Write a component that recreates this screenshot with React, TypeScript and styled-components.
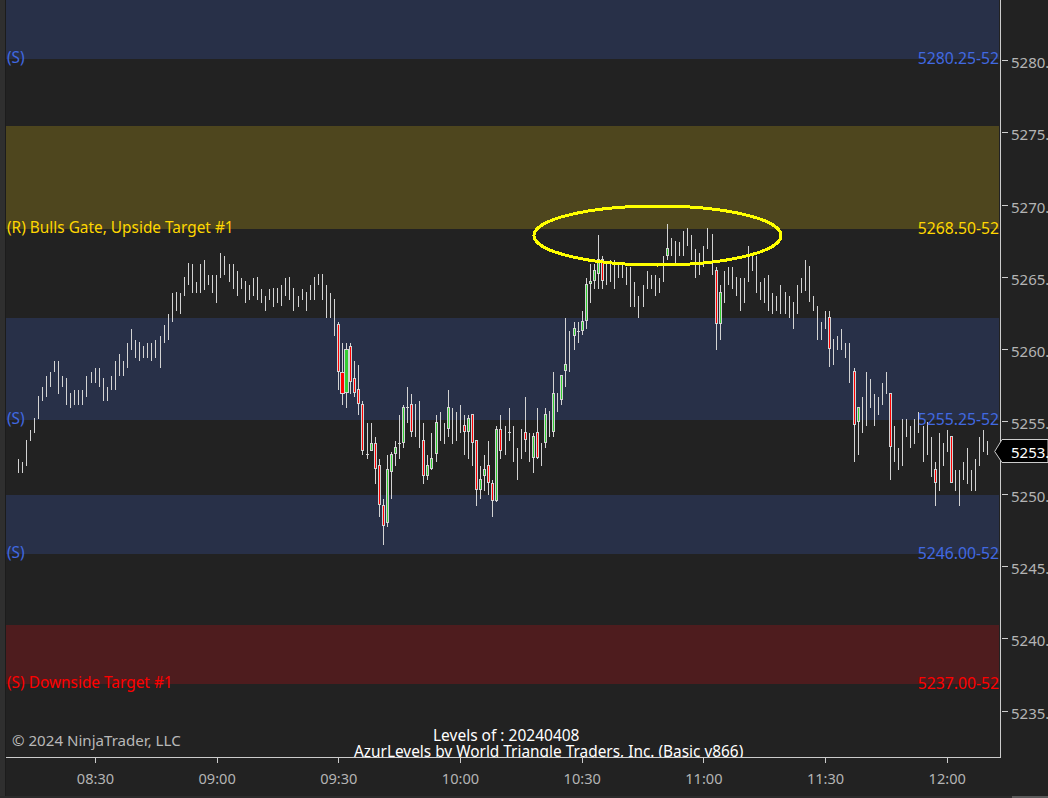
import styled, { createGlobalStyle } from 'styled-components'

type Kind = 'r' | 'g' | 'R' | 'G'
type Row = [number, number] | [number, number, number, number, Kind]

// rows are read off in thirds of a pixel, from the y where each stretch starts
const stretch = (y0: number, rows: Row[]) =>
  rows.map((r) => r.map((v) => (typeof v === 'number' ? y0 + v / 3 : v)) as Row)

const bars: Row[] = [
  ...stretch(400, [[177, 219], [186, 219], [120, 198], [90, 123], [54, 99]]),
  ...stretch(230, [
    [498, 567], [471, 513], [438, 501], [427, 471], [393, 426], [393, 491], [438, 471], [445, 525], [489, 534], [480, 525], [480, 525], [480, 525],
    [438, 501], [426, 459], [414, 459], [414, 471], [444, 513], [471, 513], [438, 480], [393, 480], [372, 438], [393, 438], [339, 414], [297, 360],
    [330, 384], [336, 393], [348, 384], [339, 384], [339, 393], [330, 384], [318, 414], [285, 339], [252, 330], [189, 276], [186, 243], [189, 252],
    [141, 198], [99, 165], [102, 189], [156, 189], [102, 189], [90, 180], [135, 165], [135, 189], [135, 219], [69, 144], [78, 135], [102, 156],
    [102, 177], [123, 198], [144, 177], [153, 219], [165, 210], [144, 198], [141, 210], [177, 219], [198, 243], [177, 210], [174, 231], [174, 219],
    [165, 228], [144, 198], [141, 210], [174, 243], [198, 231], [177, 210], [186, 243], [165, 210], [141, 210], [132, 165], [132, 210], [165, 264],
    [189, 264], [207, 318],
  ]),
  ...stretch(300, [
    [66, 270, 72, 215, 'r'], [129, 315, 215, 281, 'R'], [129, 324, 148, 281, 'G'], [129, 282, 139, 248, 'r'], [183, 291, 235, 281, 'r'],
    [195, 345, 268, 314, 'r'], [304, 465, 313, 455, 'r'], [370, 477, 463, 463, 'g'], [370, 455, 430, 455, 'g'], [411, 552, 430, 509, 'r'],
    [477, 651, 496, 617, 'r'], [597, 735, 616, 680, 'r'], [465, 681, 508, 671, 'g'], [457, 597, 463, 517, 'g'], [423, 498, 442, 464, 'g'],
    [346, 477, 430, 430, 'g'], [316, 444, 322, 431, 'g'], [262, 369, 322, 322, 'g'], [282, 411, 313, 397, 'r'], [312, 411], [304, 444],
    [370, 552, 421, 529, 'r'], [465, 540, 496, 529, 'g'], [400, 510, 475, 508, 'g'], [346, 486, 367, 464, 'g'], [336, 423], [370, 432],
    [270, 411, 322, 388, 'g'], [325, 432], [336, 423], [315, 399], [346, 465, 376, 398, 'r'], [346, 477, 355, 398, 'g'], [343, 498, 343, 431, 'r'],
    [421, 618, 421, 571, 'r'], [498, 597, 538, 571, 'g'], [465, 573, 508, 529, 'g'], [423, 585, 496, 550, 'r'], [540, 651, 550, 605, 'r'],
    [378, 605, 388, 605, 'g'], [346, 477, 388, 455, 'r'], [378, 465], [324, 423, 397, 397, 'g'], [378, 486], [445, 540], [388, 477],
    [291, 456, 397, 422, 'r'], [400, 486], [400, 519, 409, 475, 'g'], [324, 477, 397, 475, 'r'], [430, 498], [324, 444, 343, 431, 'g'], [334, 411],
    [216, 411, 280, 398, 'g'], [280, 336], [226, 315, 226, 302, 'g'], [54, 261, 193, 215, 'g'], [94, 216], [66, 150, 84, 107, 'g'], [66, 129, 94, 94, 'g'],
  ]),
  ...stretch(195, [
    [348, 420, 379, 410, 'g'], [250, 402, 268, 380, 'g'], [207, 324, 259, 268, 'g'], [207, 282, 226, 260, 'g'], [120, 282, 193, 239, 'g'],
    [183, 282, 193, 260, 'r'], [205, 270], [195, 261], [195, 282], [210, 249], [210, 249], [216, 270], [216, 336], [261, 336], [303, 369], [270, 336],
    [228, 282], [240, 282], [240, 303], [249, 294], [183, 261], [87, 195, 160, 183, 'g'], [129, 183], [138, 207], [141, 183], [108, 183], [99, 153],
    [120, 195], [162, 249], [174, 240], [153, 216], [99, 162], [117, 240], [216, 465, 226, 389, 'r'], [270, 435, 292, 389, 'g'], [228, 324], [216, 270],
    [216, 282], [246, 303], [249, 348], [249, 324], [153, 261], [180, 228], [183, 294], [261, 315], [249, 324], [240, 348], [294, 357], [303, 348],
    [270, 357], [291, 357], [303, 369], [321, 402], [270, 357],
  ]),
  ...stretch(250, [
    [84, 129], [30, 123], [48, 157], [138, 183], [168, 270], [216, 270], [183, 237], [184, 352, 202, 298, 'r'], [268, 345], [258, 300], [238, 300],
    [280, 324], [280, 400], [354, 636, 364, 526, 'r'], [472, 615, 472, 517, 'g'], [441, 548], [366, 528], [387, 474], [432, 528], [441, 495], [399, 465],
    [366, 432], [430, 690, 430, 592, 'r'], [528, 636], [594, 660], [507, 648], [507, 561], [528, 594], [507, 582], [486, 549], [528, 636], [516, 615],
    [561, 681], [636, 768, 658, 700, 'r'], [549, 722], [579, 648], [540, 606], [558, 700, 558, 700, 'r'], [660, 722], [660, 768], [636, 690], [594, 702],
    [660, 722], [627, 722], [561, 648], [540, 606], [573, 615],
  ]),
]

const bands = [
  { y: 0, h: 59, fill: '#283048' },
  { y: 126, h: 103, fill: '#4e461e' },
  { y: 318, h: 102, fill: '#283048' },
  { y: 495, h: 59, fill: '#283048' },
  { y: 625, h: 59, fill: '#4e1c1e' },
]

const levels = [
  { y: 57, tone: '#4169e1', name: '(S)', price: '5280.25-52' },
  { y: 227, tone: '#ffd700', name: '(R) Bulls Gate, Upside Target #1', price: '5268.50-52' },
  { y: 418, tone: '#4169e1', name: '(S)', price: '5255.25-52' },
  { y: 552, tone: '#4169e1', name: '(S)', price: '5246.00-52' },
  { y: 682, tone: '#ff0000', name: '(S) Downside Target #1', price: '5237.00-52' },
]

const priceTicks = [5280, 5275, 5270, 5265, 5260, 5255, 5250, 5245, 5240, 5235]
const timeTicks = ['08:30', '09:00', '09:30', '10:00', '10:30', '11:00', '11:30', '12:00']

const GlobalStyle = createGlobalStyle`
  html, body { margin: 0; height: 100%; background: #222222; overflow: hidden; }
  body { font-family: "Noto Sans", "Open Sans", sans-serif; }
`

const Page = styled.div`
  width: 1048px;
  height: 798px;
  display: grid;
  grid-template-columns: 6px 995px 47px;
  grid-template-rows: 758px 38px 2px;
  background: #222222;
  overflow: hidden;
`

const LeftEdge = styled.div`
  grid-row: 1 / 3;
  background: #2f2f2f;
  border-right: 1px solid #1c1c1c;
  box-sizing: border-box;
`

const Plot = styled.div`
  position: relative;
  overflow: hidden;
  border-right: 1px solid #cccccc;
  border-bottom: 1px solid #cccccc;
  box-sizing: border-box;
`

const Chart = styled.svg`
  position: absolute;
  inset: 0;
  display: block;
  shape-rendering: crispEdges;
`

const Wick = styled.rect`
  fill: #d3d3d3;
`

const LevelRow = styled.div<{ $y: number; $tone: string }>`
  position: absolute;
  left: 1px;
  right: 1px;
  top: ${({ $y }) => $y - 11}px;
  display: flex;
  justify-content: space-between;
  line-height: 24px;
  font-size: 15.4px;
  white-space: nowrap;
  color: ${({ $tone }) => $tone};
`

const LevelPrice = styled.span`
  font-size: 15.75px;
`

const Copyright = styled.span`
  position: absolute;
  left: 6px;
  top: 728px;
  line-height: 24px;
  font-size: 15.1px;
  white-space: nowrap;
  color: #b8b8b8;
`

const Captions = styled.div`
  position: absolute;
  left: 348px;
  top: 727px;
  display: flex;
  flex-direction: column;
  align-items: flex-start;
  row-gap: 1px;
  line-height: 16px;
  font-size: 15.4px;
  white-space: nowrap;
  color: #ffffff;
`

const LevelsDate = styled.span`
  margin-left: 79px;
  font-size: 15.5px;
`

const PriceAxis = styled.div`
  position: relative;
  display: flex;
  flex-direction: column;
  padding-top: 60px;
  min-height: 0;
`

const PriceTick = styled.div`
  flex: none;
  height: 72.3px;
  display: flex;
  align-items: flex-start;
  column-gap: 3px;
  font-size: 15px;
  line-height: 24px;
  color: #b4b4b4;
  white-space: nowrap;

  &::before {
    content: '';
    flex: none;
    width: 6px;
    height: 1px;
    margin-left: 1px;
    background: #cccccc;
  }

  & > span {
    margin-top: -10px;
  }
`

const CurrentTag = styled.div`
  position: absolute;
  left: -7px;
  top: 439px;
  width: 54px;
  height: 24px;
`

const TagShape = styled.svg`
  position: absolute;
  inset: 0;
`

const TagPrice = styled.span`
  position: absolute;
  left: 17px;
  top: 0;
  line-height: 26px;
  font-size: 15px;
  color: #ffffff;
`

const TimeAxis = styled.div`
  grid-column: 2 / 4;
  display: flex;
  padding-left: 28.6px;
`

const TimeTick = styled.div`
  flex: none;
  width: 121.7px;
  display: flex;
  flex-direction: column;
  align-items: center;
  row-gap: 5px;
  font-size: 14.6px;
  color: #b4b4b4;

  &::before {
    content: '';
    width: 1px;
    height: 5px;
    background: #cccccc;
  }
`

const BottomEdge = styled.div`
  grid-column: 1 / 4;
  background: linear-gradient(to right, #2b2b2b 1012px, #5a5a5a 1012px);
`

function Bar({ row, i }: { row: Row; i: number }) {
  const x = Math.floor(18 + 4.0585 * i)
  const [high, low, top, bottom, kind] = row
  const fat = kind === 'R' || kind === 'G'
  const left = fat ? x - 2 : x - 1
  const w = fat ? 5 : 3
  const h = top !== undefined ? Math.max(Math.round(bottom! - top), 1) : 0
  return (
    <g>
      <Wick x={x} y={Math.round(high)} width={1} height={Math.round(low - high)} />
      {top !== undefined && (
        <>
          <Wick x={left} y={Math.round(top)} width={w} height={h} />
          {h > 2 && (
            <rect
              x={left + 1}
              y={Math.round(top) + 1}
              width={w - 2}
              height={h - 2}
              fill={kind === 'r' || kind === 'R' ? '#ff0000' : '#32cd32'}
            />
          )}
        </>
      )}
    </g>
  )
}

export default function App() {
  return (
    <Page>
      <GlobalStyle />
      <LeftEdge />
      <Plot>
        <Chart width={995} height={758} viewBox="6 0 995 758">
          {bands.map((b) => (
            <rect key={b.y} x={6} y={b.y} width={993} height={b.h} fill={b.fill} />
          ))}
          {bars.map((row, i) => (
            <Bar key={i} row={row} i={i} />
          ))}
          <ellipse cx={657.5} cy={235.5} rx={123.5} ry={29.5} fill="none" stroke="#ffff00" strokeWidth={3} />
        </Chart>
        {levels.map((l) => (
          <LevelRow key={l.y} $y={l.y} $tone={l.tone}>
            <span>{l.name}</span>
            <LevelPrice>{l.price}</LevelPrice>
          </LevelRow>
        ))}
        <Copyright>© 2024 NinjaTrader, LLC</Copyright>
        <Captions>
          <LevelsDate>Levels of : 20240408</LevelsDate>
          <span>AzurLevels by World Triangle Traders, Inc. (Basic v866)</span>
        </Captions>
      </Plot>
      <PriceAxis>
        {priceTicks.map((p) => (
          <PriceTick key={p}>
            <span>{p}.</span>
          </PriceTick>
        ))}
        <CurrentTag>
          <TagShape width={54} height={24} viewBox="0 0 54 24">
            <path d="M54 .5H8L.7 12.5 8 23.5H54Z" fill="#000000" stroke="#cccccc" />
          </TagShape>
          <TagPrice>5253.</TagPrice>
        </CurrentTag>
      </PriceAxis>
      <TimeAxis>
        {timeTicks.map((t) => (
          <TimeTick key={t}>{t}</TimeTick>
        ))}
      </TimeAxis>
      <BottomEdge />
    </Page>
  )
}
